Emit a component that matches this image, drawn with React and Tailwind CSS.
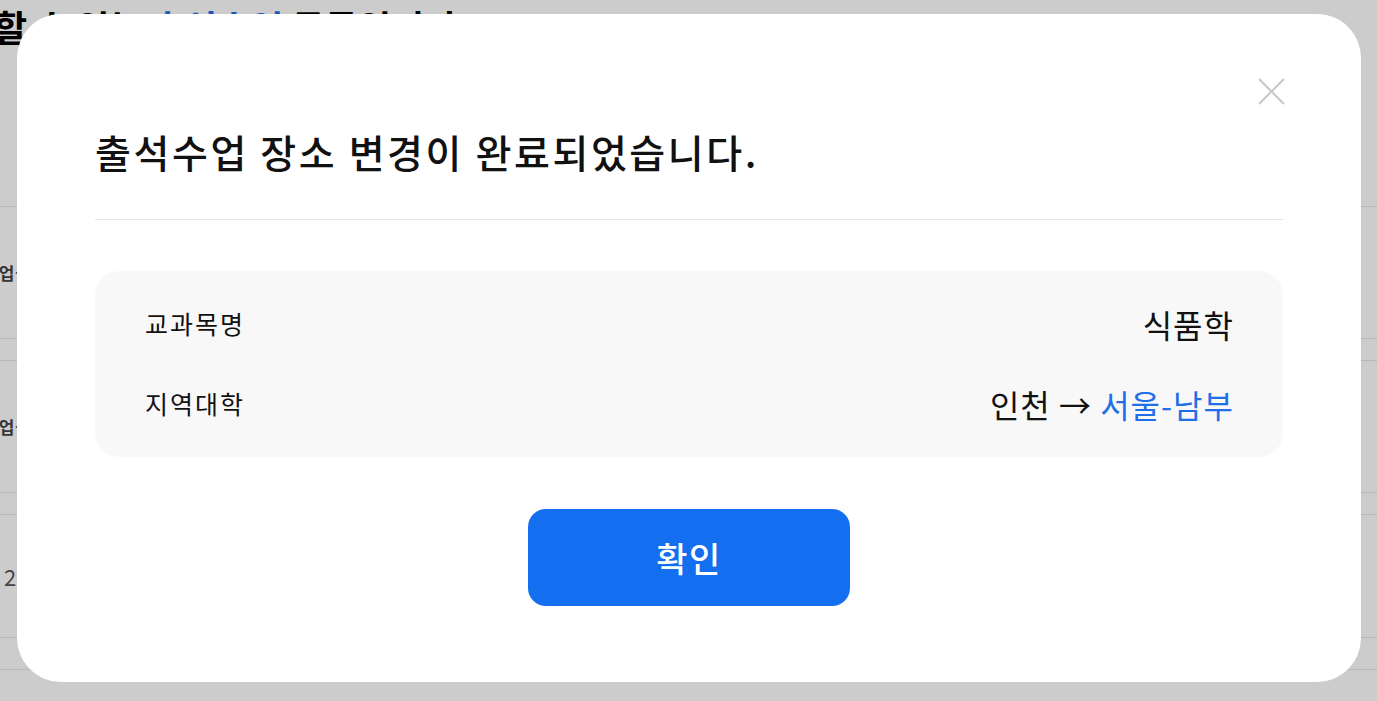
const FONT = {
  fontFamily: '"Noto Sans CJK KR", "Noto Sans", sans-serif',
};

const ROWS = [
  { label: "교과목명", value: <span>식품학</span> },
  {
    label: "지역대학",
    value: (
      <span>
        인천 → <span className="text-[#1f6fe8]">서울-남부</span>
      </span>
    ),
  },
];

// Page that sits behind the dimmed overlay
function BackgroundPage() {
  return (
    <div className="h-full bg-white">
      <h1 className="-ml-[6px] pt-[4px] text-[36px] font-bold leading-[44px] text-black whitespace-nowrap">
        할 수 있는 <span className="text-[#1f6fe8]">출석수업</span> 목록입니다
      </h1>
      <div className="mt-[158px] flex flex-col gap-[21px]">
        <div className="h-[133px] border-y border-[#e5e5e5] flex items-center">
          <p className="-ml-[18px] text-[17px] font-bold text-[#444] tracking-[1px]">수업을</p>
        </div>
        <div className="h-[133px] border-y border-[#e5e5e5] flex items-center">
          <p className="-ml-[18px] text-[17px] font-bold text-[#444] tracking-[1px]">수업을</p>
        </div>
        <div className="h-[124px] border-y border-[#e5e5e5] flex items-center">
          <p className="ml-[4px] text-[22px] text-[#555]">2025</p>
        </div>
        <div className="mt-[10px] h-[10px] border-t border-[#e5e5e5]" />
      </div>
    </div>
  );
}

export default function App() {
  return (
    <div className="relative h-[701px] w-full overflow-hidden" style={FONT}>
      <BackgroundPage />

      <div className="absolute inset-0 bg-black/20" />

      <div className="absolute left-[17px] top-[14px] w-[1344px] h-[668px] rounded-[44px] bg-white px-[78px] pt-[112px]">
        <button
          type="button"
          className="absolute right-[76px] top-[64px]"
          aria-label="닫기"
        >
          <svg width="27" height="27" viewBox="0 0 27 27" fill="none">
            <path
              d="M1 1L26 26M26 1L1 26"
              stroke="#c8c8c8"
              strokeWidth="2"
            />
          </svg>
        </button>

        <h2 className="text-[39px] font-medium leading-[50px] text-[#111] tracking-[2.6px]">
          출석수업 장소 변경이 완료되었습니다.
        </h2>

        <div className="mt-[43px] h-px bg-[#e6e6e6]" />

        <div className="mt-[51px] rounded-[24px] bg-[#f8f8f8] px-[50px] py-[33px] flex flex-col gap-[40px]">
          {ROWS.map((row) => (
            <div
              key={row.label}
              className="h-[40px] flex items-center justify-between"
            >
              <span className="text-[25px] text-[#111] tracking-[2px]">
                {row.label}
              </span>
              <span className="text-[32px] text-[#111] tracking-[1px] -mr-[1px]">
                {row.value}
              </span>
            </div>
          ))}
        </div>

        <div className="mt-[52px] flex justify-center">
          <button
            type="button"
            className="w-[322px] h-[97px] rounded-[18px] bg-[#146ef0] text-white text-[34px] font-medium tracking-[1.5px]"
          >
            확인
          </button>
        </div>
      </div>
    </div>
  );
}
